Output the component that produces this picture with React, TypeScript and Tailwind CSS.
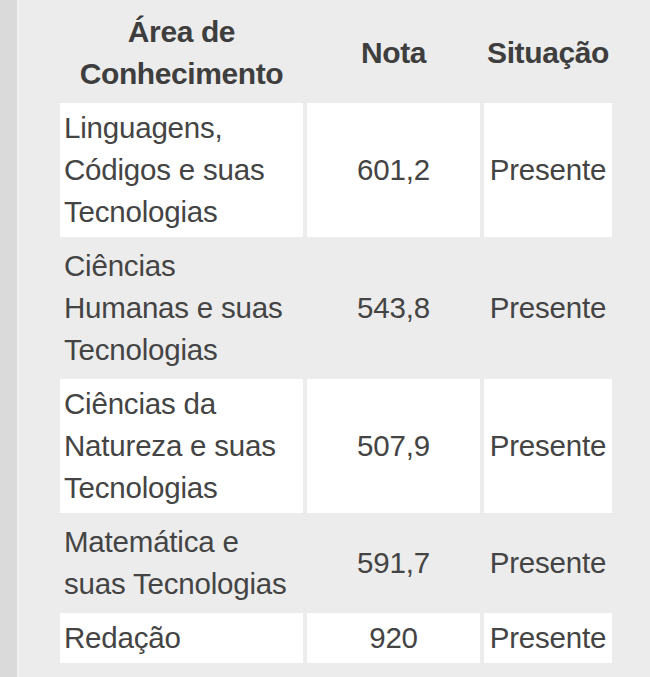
import React from "react";

const rows = [
  { area: ["Linguagens,", "Códigos e suas", "Tecnologias"], nota: "601,2", situacao: "Presente" },
  { area: ["Ciências", "Humanas e suas", "Tecnologias"], nota: "543,8", situacao: "Presente" },
  { area: ["Ciências da", "Natureza e suas", "Tecnologias"], nota: "507,9", situacao: "Presente" },
  { area: ["Matemática e", "suas Tecnologias"], nota: "591,7", situacao: "Presente" },
  { area: ["Redação"], nota: "920", situacao: "Presente" },
];

const App = () => {
  return (
    <div
      className="flex h-[677px] w-[650px] overflow-hidden bg-[#ececec] text-[#444444]"
      style={{ fontFamily: '"Liberation Sans", Arial, sans-serif' }}
    >
      <div className="h-full w-[17px] shrink-0 bg-[#dadada]" />
      <div className="h-full w-[2px] shrink-0 bg-[#f1f1f1]" />
      <div className="pl-[37px] pt-[3px]">
        <table className="table-fixed border-separate border-spacing-1 text-[29.5px] leading-[42px] tracking-[-0.2px]">
          <thead>
            <tr>
              <th className="w-[243px] px-1 py-1 text-center align-middle text-[30px] font-bold tracking-[-0.4px] text-[#3e3e3e]">
                Área de
                <br />
                Conhecimento
              </th>
              <th className="w-[173px] px-1 py-1 text-center align-middle text-[30px] font-bold tracking-[-0.4px] text-[#3e3e3e]">
                Nota
              </th>
              <th className="w-[128px] whitespace-nowrap px-0 py-1 text-center align-middle text-[30px] font-bold tracking-[-0.4px] text-[#3e3e3e]">
                Situação
              </th>
            </tr>
          </thead>
          <tbody>
            {rows.map((r, i) => {
              const bg = i % 2 === 0 ? "bg-white" : "";
              return (
                <tr key={i}>
                  <td className={`${bg} px-1 py-1 text-left align-middle`}>
                    {r.area.map((line, j) => (
                      <div key={j} className="whitespace-nowrap">
                        {line}
                      </div>
                    ))}
                  </td>
                  <td className={`${bg} px-1 py-1 text-center align-middle`}>{r.nota}</td>
                  <td className={`${bg} whitespace-nowrap px-0 py-1 text-center align-middle`}>
                    {r.situacao}
                  </td>
                </tr>
              );
            })}
          </tbody>
        </table>
      </div>
    </div>
  );
};

export default App;
